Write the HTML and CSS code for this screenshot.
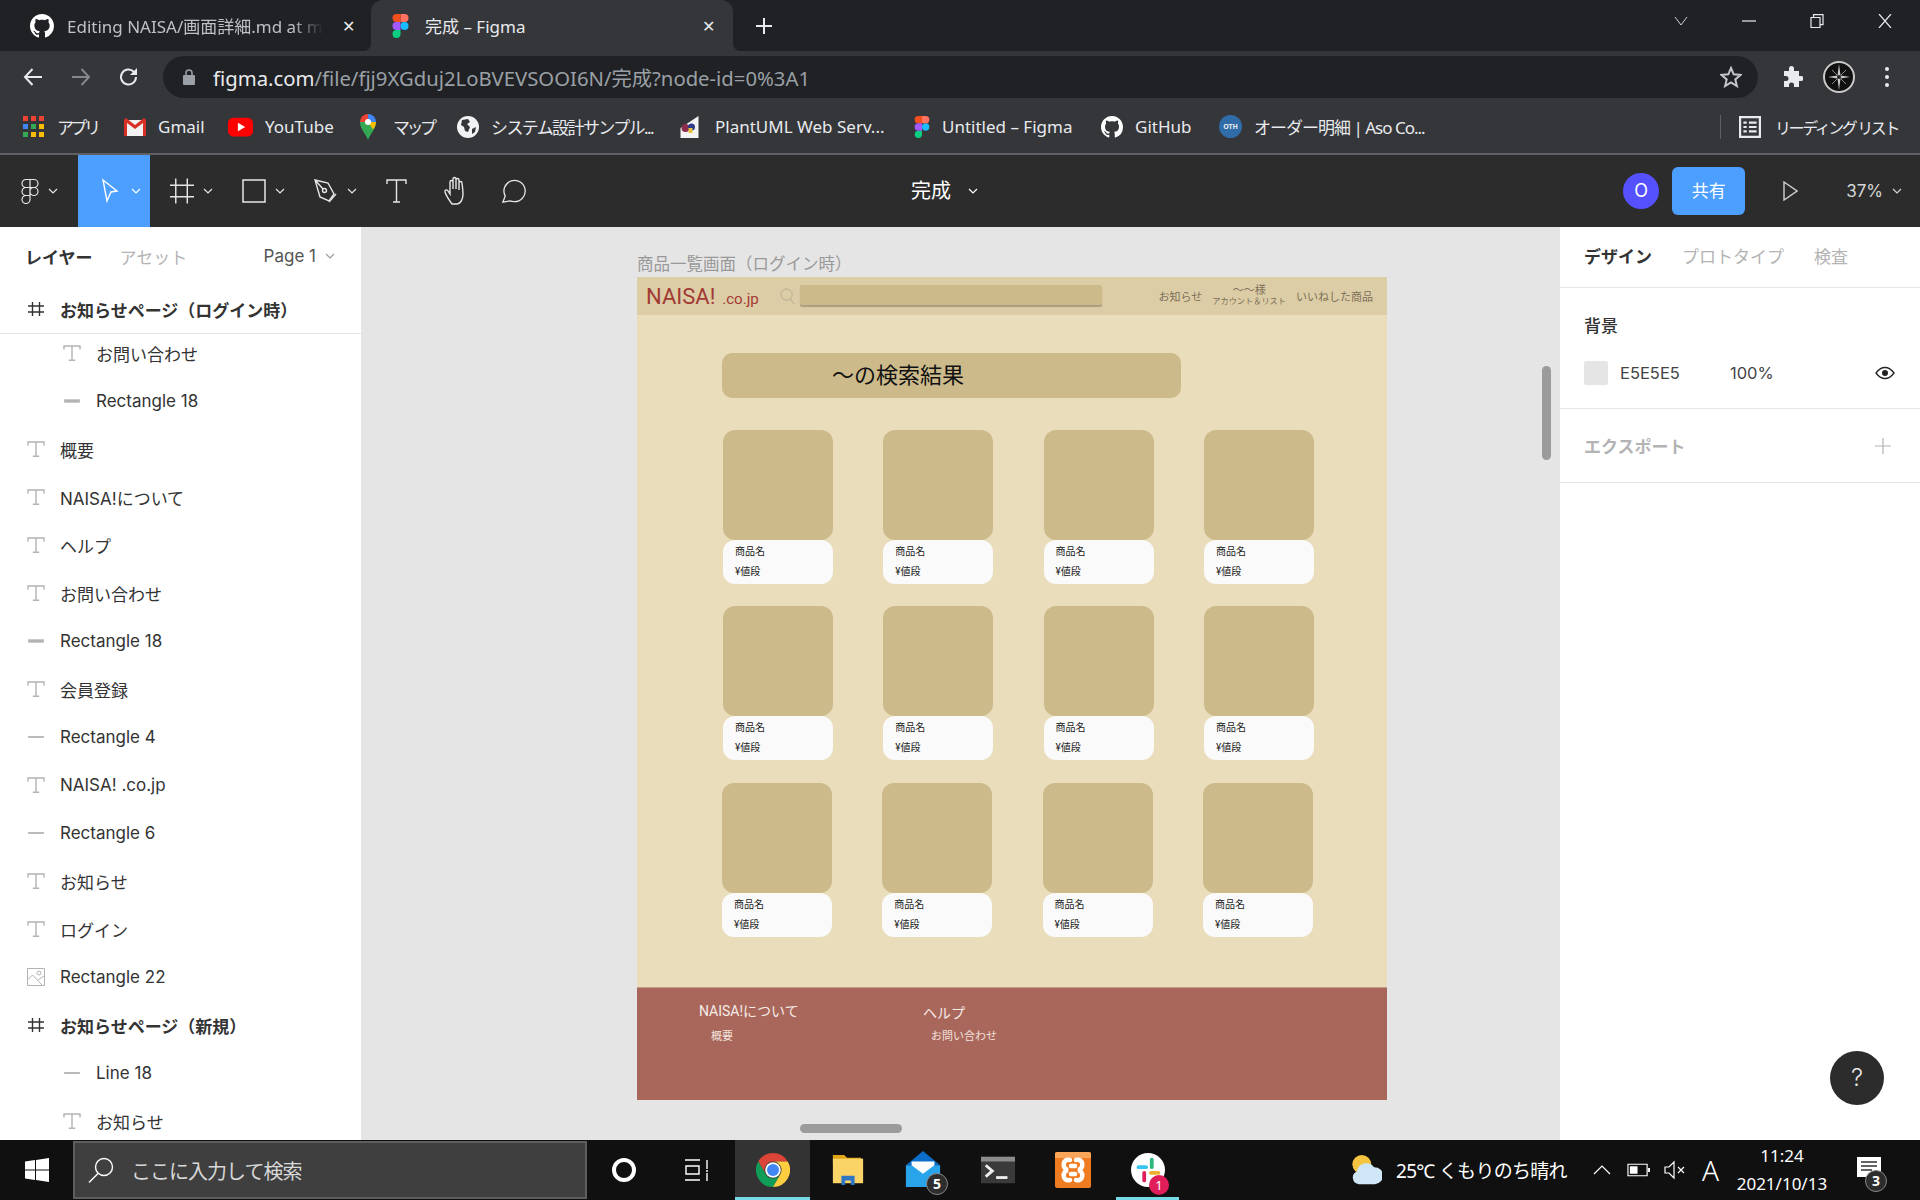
FILE: index.html
```html
<!DOCTYPE html>
<html lang="ja">
<head>
  <meta charset="UTF-8">
  <title>完成 – Figma</title>
  <link rel="stylesheet" href="styles.css">
</head>
<body>

  <svg class="defs" width="0" height="0">
    <symbol id="i-github" viewBox="0 0 16 16"><path fill="currentColor" d="M8 0C3.58 0 0 3.58 0 8c0 3.54 2.29 6.53 5.47 7.59.4.07.55-.17.55-.38 0-.19-.01-.82-.01-1.49-2.01.37-2.53-.49-2.69-.94-.09-.23-.48-.94-.82-1.13-.28-.15-.68-.52-.01-.53.63-.01 1.08.58 1.23.82.72 1.21 1.87.87 2.33.66.07-.52.28-.87.51-1.07-1.78-.2-3.64-.89-3.64-3.95 0-.87.31-1.59.82-2.15-.08-.2-.36-1.02.08-2.12 0 0 .67-.21 2.2.82.64-.18 1.32-.27 2-.27.68 0 1.36.09 2 .27 1.53-1.04 2.2-.82 2.2-.82.44 1.1.16 1.92.08 2.12.51.56.82 1.27.82 2.15 0 3.07-1.87 3.75-3.65 3.95.29.25.54.73.54 1.48 0 1.07-.01 1.93-.01 2.2 0 .21.15.46.55.38A8.013 8.013 0 0016 8c0-4.42-3.58-8-8-8z"/></symbol>
    <symbol id="i-figma" viewBox="0 0 38 57">
      <path fill="#1abcfe" d="M19 28.5a9.5 9.5 0 1 1 19 0 9.5 9.5 0 0 1-19 0z"/>
      <path fill="#0acf83" d="M0 47.5A9.5 9.5 0 0 1 9.5 38H19v9.5a9.5 9.5 0 1 1-19 0z"/>
      <path fill="#ff7262" d="M19 0v19h9.5a9.5 9.5 0 1 0 0-19H19z"/>
      <path fill="#f24e1e" d="M0 9.5A9.5 9.5 0 0 0 9.5 19H19V0H9.5A9.5 9.5 0 0 0 0 9.5z"/>
      <path fill="#a259ff" d="M0 28.5A9.5 9.5 0 0 0 9.5 38H19V19H9.5A9.5 9.5 0 0 0 0 28.5z"/>
    </symbol>
    <symbol id="i-chev" viewBox="0 0 10 6"><path fill="none" stroke="currentColor" stroke-width="1.2" d="M1 1l4 4 4-4"/></symbol>
    <symbol id="i-text" viewBox="0 0 18 16"><path fill="none" stroke="#b3b3b3" stroke-width="1.4" d="M1 4.500V1h16v3.500M9 1v14.300M5.800 15.300h6.400"/></symbol>
    <symbol id="i-rect" viewBox="0 0 16 16"><path fill="none" stroke="#b3b3b3" stroke-width="3" d="M1 8h14"/></symbol>
    <symbol id="i-line" viewBox="0 0 16 16"><path fill="none" stroke="#b3b3b3" stroke-width="1.6" d="M1 8h14"/></symbol>
    <symbol id="i-frame" viewBox="0 0 18 16"><path fill="none" stroke="#333" stroke-width="1.4" d="M1 5h16M1 11h16M5.500 1v14M12.500 1v14"/></symbol>
    <symbol id="i-image" viewBox="0 0 18 18"><path fill="none" stroke="#b3b3b3" stroke-width="1" d="M.5.5h17v17H.5zM.5 12l5-5 10 10.500M11 12l6-4"/><circle cx="12" cy="5" r="2" fill="none" stroke="#b3b3b3"/></symbol>
    <symbol id="i-chrome" viewBox="0 0 48 48">
      <path fill="#db4437" d="M24 0C15.100 0 7.300 4.800 3.200 12l10.400 18A12 12 0 0 1 24 12h20.800C40.700 4.800 32.900 0 24 0z"/>
      <path fill="#0f9d58" d="M3.200 12A24 24 0 0 0 24 48l10.400-18a12 12 0 0 1-20.800 0z"/>
      <path fill="#ffcd40" d="M44.800 12H24a12 12 0 0 1 10.400 18L24 48a24 24 0 0 0 20.800-36z"/>
      <circle cx="24" cy="24" r="11" fill="#fff"/><circle cx="24" cy="24" r="8.500" fill="#4285f4"/>
    </symbol>
  </svg>

  <div class="tabstrip">
    <div class="tab">
      <svg class="tab-icon"><use href="#i-github"/></svg>
      <span class="tab-title fade">Editing NAISA/画面詳細.md at m</span>
      <span class="tab-close">✕</span>
    </div>
    <div class="tab active">
      <svg class="tab-icon figma-small"><use href="#i-figma"/></svg>
      <span class="tab-title">完成 – Figma</span>
      <span class="tab-close">✕</span>
    </div>
    <svg class="new-tab" viewBox="0 0 18 18"><path stroke="#e8eaed" stroke-width="2" d="M9 1v16M1 9h16"/></svg>
    <div class="win-controls">
      <svg viewBox="0 0 14 14"><path fill="none" stroke="#cfd0d2" d="M1 3l6 8 6-8"/></svg>
      <svg viewBox="0 0 14 14"><path stroke="#e8eaed" stroke-width="1.200" d="M0 7h14"/></svg>
      <svg viewBox="0 0 14 14"><path fill="none" stroke="#e8eaed" stroke-width="1.200" d="M1 3.500h9v10H1zM3.500 3.500V.7h9.500v10h-3"/></svg>
      <svg viewBox="0 0 14 14"><path stroke="#e8eaed" stroke-width="1.200" d="M1 0l12 14M13 0L1 14"/></svg>
    </div>
  </div>

  <div class="addressrow">
    <svg class="nav-btn" viewBox="0 0 20 20"><path fill="none" stroke="#e8eaed" stroke-width="2" d="M19 10H2M9.500 2L2 10l7.500 8"/></svg>
    <svg class="nav-btn" viewBox="0 0 20 20"><path fill="none" stroke="#85878a" stroke-width="2" d="M1 10h17M10.500 2L18 10l-7.500 8"/></svg>
    <svg class="nav-btn" viewBox="0 0 20 20"><path fill="none" stroke="#e8eaed" stroke-width="2" d="M17 10a7.500 7.500 0 1 1-2.200-5.300L17 7"/><path fill="#e8eaed" d="M18 1v7h-7z"/></svg>
    <div class="omnibox">
      <svg class="lock" viewBox="0 0 12 16"><path fill="#9aa0a6" d="M1 6h10a1 1 0 0 1 1 1v8a1 1 0 0 1-1 1H1a1 1 0 0 1-1-1V7a1 1 0 0 1 1-1z"/><path fill="none" stroke="#9aa0a6" stroke-width="1.500" d="M3 6V4a3 3 0 0 1 6 0v2"/></svg>
      <span class="url"><b>figma.com</b>/file/fjj9XGduj2LoBVEVSOOI6N/完成?node-id=0%3A1</span>
      <svg class="star" viewBox="0 0 22 22"><path fill="none" stroke="#c4c6c9" stroke-width="2" d="M11 2l2.700 6.300 6.800.6-5.200 4.500 1.600 6.700L11 16.500l-5.900 3.600 1.600-6.700L1.500 8.900l6.800-.6z"/></svg>
    </div>
    <svg class="puzzle" viewBox="0 0 22 22"><path fill="#e8eaed" d="M8 2.500a2.500 2.500 0 0 1 5 0V5h5v5h2a2.500 2.500 0 0 1 0 5h-2v6h-5v-2a2.500 2.500 0 0 0-5 0v2H3v-6h2a2.500 2.500 0 0 0 0-5H3V5h5z"/></svg>
    <svg class="profile" viewBox="0 0 32 32">
      <circle cx="16" cy="16" r="15" fill="#111" stroke="#c9c9c9" stroke-width="2"/>
      <path fill="#c9c9c9" d="M16 3l1.500 11.500L27 16l-9.500 1.500L16 29l-1.500-11.500L5 16l9.500-1.500z"/>
      <path fill="none" stroke="#888" d="M9 9l14 14M23 9L9 23"/>
      <circle cx="16" cy="16" r="2" fill="#222"/>
    </svg>
    <div class="menu-dots"><i></i><i></i><i></i></div>
  </div>

  <div class="bookmarks">
    <div class="bm">
      <div class="apps-grid">
        <i class="c-r"></i><i class="c-r"></i><i class="c-r"></i>
        <i class="c-b"></i><i class="c-g"></i><i class="c-y"></i>
        <i class="c-g"></i><i class="c-y"></i><i class="c-y"></i>
      </div>
      <span class="tighter">アプリ</span>
    </div>
    <div class="bm">
      <svg class="bm-icon" viewBox="0 0 22 18"><path fill="#f2f2f2" d="M0 2h22v16H0z"/><path fill="#d93025" d="M0 2l2-2 9 7 9-7 2 2v16h-3V5l-8 6-8-6v13H0z"/></svg>
      <span>Gmail</span>
    </div>
    <div class="bm">
      <svg class="bm-icon wide" viewBox="0 0 24 18"><rect width="24" height="18" rx="5" fill="#f00"/><path fill="#fff" d="M9.500 5l7 4-7 4z"/></svg>
      <span>YouTube</span>
    </div>
    <div class="bm">
      <svg class="bm-icon maps" viewBox="0 0 16 26">
        <path fill="#34a853" d="M8 26C6 20 0 15 0 8h16c0 7-6 12-8 18z"/>
        <path fill="#fbbc04" d="M16 8c0 3-1.500 5.500-3 7.500L8 8z"/>
        <path fill="#4285f4" d="M8 0a8 8 0 0 1 8 8H8z"/>
        <path fill="#ea4335" d="M8 0a8 8 0 0 0-8 8h8z"/>
        <circle cx="8" cy="8" r="3" fill="#fff"/>
      </svg>
      <span class="tighter">マップ</span>
    </div>
    <div class="bm">
      <svg class="bm-icon" viewBox="0 0 22 22"><circle cx="11" cy="11" r="11" fill="#f1f3f4"/><path fill="#35363a" d="M5 4l6-1 2 3-3 2 3 3-2 5-3-1-1-4-3-2zM15 13l4-2-1 5-3 2z"/></svg>
      <span class="tight">システム設計サンプル...</span>
    </div>
    <div class="bm">
      <svg class="bm-icon wide" viewBox="0 0 24 22"><path fill="#f4f4f4" d="M2 12L20 0v22H2z"/><circle cx="7" cy="12" r="4" fill="#8a2c4a"/><circle cx="13" cy="11" r="3.500" fill="#2c3a8a"/><path fill="#e8c440" d="M10 12h4v5h-4z"/></svg>
      <span>PlantUML Web Serv...</span>
    </div>
    <div class="bm">
      <svg class="bm-icon figma-bm"><use href="#i-figma"/></svg>
      <span>Untitled – Figma</span>
    </div>
    <div class="bm">
      <svg class="bm-icon"><use href="#i-github"/></svg>
      <span>GitHub</span>
    </div>
    <div class="bm">
      <span class="oth">OTH</span>
      <span class="tight-1">オーダー明細 | Aso Co...</span>
    </div>
    <div class="reading">
      <svg class="bm-icon" viewBox="0 0 20 20"><path fill="none" stroke="#e8eaed" stroke-width="2" d="M1 1h18v18H1z"/><path stroke="#e8eaed" stroke-width="2" d="M4 6h3M9 6h7M4 10h3M9 10h7M4 14h3M9 14h7"/></svg>
      <span class="reading-text">リーディング リスト</span>
    </div>
  </div>

  <div class="fig-toolbar">
    <div class="tool tool-logo">
      <svg class="tool-svg logo-outline" viewBox="0 0 18 25"><path fill="none" stroke="#e6e6e6" stroke-width="1.200" d="M9 1H5a4 4 0 0 0 0 8h4zM9 1h4a4 4 0 0 1 0 8H9zM9 9H5a4 4 0 0 0 0 8h4zM9 13a4 4 0 1 0 8 0 4 4 0 0 0-8 0zM9 17H5a4 4 0 1 0 4 4z"/></svg>
      <svg class="chev"><use href="#i-chev"/></svg>
    </div>
    <div class="tool tool-move">
      <svg class="tool-svg" viewBox="0 0 18 26"><path fill="none" stroke="#fff" stroke-width="1.400" d="M2 2l14 11-6 1-4 9z"/></svg>
      <svg class="chev"><use href="#i-chev"/></svg>
    </div>
    <div class="tool">
      <svg class="tool-svg" viewBox="0 0 25 26"><path fill="none" stroke="#e6e6e6" stroke-width="1.500" d="M0 7h25M0 19h25M6 0v26M18 0v26"/></svg>
      <svg class="chev"><use href="#i-chev"/></svg>
    </div>
    <div class="tool">
      <svg class="tool-svg" viewBox="0 0 24 24"><path fill="none" stroke="#e6e6e6" stroke-width="1.500" d="M1 1h22v22H1z"/></svg>
      <svg class="chev"><use href="#i-chev"/></svg>
    </div>
    <div class="tool">
      <svg class="tool-svg" viewBox="0 0 24 24"><path fill="none" stroke="#e6e6e6" stroke-width="1.400" d="M1 1l13 3 6 11-5 7-9-4zM1 1l8 9"/><circle cx="10.500" cy="11.500" r="2" fill="none" stroke="#e6e6e6" stroke-width="1.400"/><path stroke="#e6e6e6" stroke-width="1.400" d="M15 23l7-8"/></svg>
      <svg class="chev"><use href="#i-chev"/></svg>
    </div>
    <div class="tool tool-plain">
      <svg class="tool-svg" viewBox="0 0 24 24"><path fill="none" stroke="#e6e6e6" stroke-width="1.400" d="M1 5V1h19v4M10.500 1v22M7 23h7"/></svg>
    </div>
    <div class="tool tool-plain">
      <svg class="tool-svg hand" viewBox="0 0 26 30"><path fill="none" stroke="#e6e6e6" stroke-width="1.400" d="M8 28C5 24 2 19 1 16c-.5-2 2-3 3-1l2 3V6c0-2 3-2 3 0v7V3c0-2 3-2 3 0v10V4c0-2 3-2 3 0v10V7c0-2 3-2 3 0 .5 4 1 8 1 11 0 6-3 10-6 10z"/></svg>
    </div>
    <div class="tool tool-plain">
      <svg class="tool-svg comment" viewBox="0 0 26 26"><path fill="none" stroke="#e6e6e6" stroke-width="1.400" d="M1 25l2.500-6.500A11.500 11.500 0 1 1 13 24.500c-1.500 0-3-.3-4.300-.8z"/></svg>
    </div>

    <div class="doc-title">完成<svg class="chev"><use href="#i-chev"/></svg></div>

    <div class="toolbar-right">
      <div class="avatar">O</div>
      <div class="share">共有</div>
      <svg class="play" viewBox="0 0 15 20"><path fill="none" stroke="#d0d0d0" stroke-width="1.400" d="M1 1l13 9-13 9z"/></svg>
      <div class="zoom">37%<svg class="chev"><use href="#i-chev"/></svg></div>
    </div>
  </div>

  <div class="workspace">
    <aside class="left-panel">
      <div class="panel-tabs">
        <span class="on">レイヤー</span>
        <span class="off">アセット</span>
        <span class="page">Page 1<svg class="chev"><use href="#i-chev"/></svg></span>
      </div>
      <div class="layer-head">
        <svg class="layer-icon"><use href="#i-frame"/></svg>お知らせページ（ログイン時）
      </div>
      <div class="layer-list">
        <div class="layer sub"><svg class="layer-icon"><use href="#i-text"/></svg>お問い合わせ</div>
        <div class="layer sub"><svg class="layer-icon"><use href="#i-rect"/></svg>Rectangle 18</div>
        <div class="layer"><svg class="layer-icon"><use href="#i-text"/></svg>概要</div>
        <div class="layer"><svg class="layer-icon"><use href="#i-text"/></svg>NAISA!について</div>
        <div class="layer"><svg class="layer-icon"><use href="#i-text"/></svg>ヘルプ</div>
        <div class="layer"><svg class="layer-icon"><use href="#i-text"/></svg>お問い合わせ</div>
        <div class="layer"><svg class="layer-icon"><use href="#i-rect"/></svg>Rectangle 18</div>
        <div class="layer"><svg class="layer-icon"><use href="#i-text"/></svg>会員登録</div>
        <div class="layer"><svg class="layer-icon"><use href="#i-line"/></svg>Rectangle 4</div>
        <div class="layer"><svg class="layer-icon"><use href="#i-text"/></svg>NAISA! .co.jp</div>
        <div class="layer"><svg class="layer-icon"><use href="#i-line"/></svg>Rectangle 6</div>
        <div class="layer"><svg class="layer-icon"><use href="#i-text"/></svg>お知らせ</div>
        <div class="layer"><svg class="layer-icon"><use href="#i-text"/></svg>ログイン</div>
        <div class="layer"><svg class="layer-icon"><use href="#i-image"/></svg>Rectangle 22</div>
        <div class="layer bold"><svg class="layer-icon"><use href="#i-frame"/></svg>お知らせページ（新規）</div>
        <div class="layer sub"><svg class="layer-icon"><use href="#i-line"/></svg>Line 18</div>
        <div class="layer sub"><svg class="layer-icon"><use href="#i-text"/></svg>お知らせ</div>
      </div>
    </aside>

    <main class="canvas">
      <div class="frame-label">商品一覧画面（ログイン時）</div>
      <div class="frame">
        <div class="site-header">
          <div class="site-logo">NAISA!<small>.co.jp</small></div>
          <svg class="site-search-icon" viewBox="0 0 16 18"><circle cx="7" cy="7" r="6" fill="none" stroke="#b5aa90"/><path stroke="#b5aa90" d="M11 11.500l4 5.500"/></svg>
          <div class="site-search"></div>
          <nav class="site-nav">
            <span>お知らせ</span>
            <span class="account"><span>～～様</span><small>アカウント＆リスト</small></span>
            <span>いいねした商品</span>
          </nav>
        </div>

        <div class="site-body">
          <div class="result-banner">～の検索結果</div>

          <div class="product-row">
            <div class="card"><div class="thumb"></div><div class="info"><p>商品名</p><p>¥値段</p></div></div>
            <div class="card"><div class="thumb"></div><div class="info"><p>商品名</p><p>¥値段</p></div></div>
            <div class="card"><div class="thumb"></div><div class="info"><p>商品名</p><p>¥値段</p></div></div>
            <div class="card"><div class="thumb"></div><div class="info"><p>商品名</p><p>¥値段</p></div></div>
          </div>
          <div class="product-row">
            <div class="card"><div class="thumb"></div><div class="info"><p>商品名</p><p>¥値段</p></div></div>
            <div class="card"><div class="thumb"></div><div class="info"><p>商品名</p><p>¥値段</p></div></div>
            <div class="card"><div class="thumb"></div><div class="info"><p>商品名</p><p>¥値段</p></div></div>
            <div class="card"><div class="thumb"></div><div class="info"><p>商品名</p><p>¥値段</p></div></div>
          </div>
          <div class="product-row last">
            <div class="card"><div class="thumb"></div><div class="info"><p>商品名</p><p>¥値段</p></div></div>
            <div class="card"><div class="thumb"></div><div class="info"><p>商品名</p><p>¥値段</p></div></div>
            <div class="card"><div class="thumb"></div><div class="info"><p>商品名</p><p>¥値段</p></div></div>
            <div class="card"><div class="thumb"></div><div class="info"><p>商品名</p><p>¥値段</p></div></div>
          </div>
        </div>

        <div class="site-footer">
          <div class="foot-col about">
            <h4>NAISA!について</h4>
            <p>概要</p>
          </div>
          <div class="foot-col help">
            <h4>ヘルプ</h4>
            <p>お問い合わせ</p>
          </div>
        </div>
      </div>

      <div class="scroll-v"></div>
      <div class="scroll-h"></div>
    </main>

    <aside class="right-panel">
      <div class="right-tabs">
        <span class="on">デザイン</span>
        <span class="off">プロトタイプ</span>
        <span class="off">検査</span>
      </div>
      <div class="right-section bg-section">
        <h5>背景</h5>
        <div class="bg-row">
          <i class="swatch"></i>
          <span class="hex">E5E5E5</span>
          <span class="opacity">100%</span>
          <svg class="eye" viewBox="0 0 20 14"><path fill="none" stroke="#222" stroke-width="1.300" d="M1 7c2.500-3.500 5.500-5.500 9-5.500S16.500 3.500 19 7c-2.500 3.500-5.500 5.500-9 5.500S3.500 10.500 1 7z"/><circle cx="10" cy="7" r="3" fill="#222"/></svg>
        </div>
      </div>
      <div class="right-section export-section">
        <h5>エクスポート</h5>
        <svg class="plus" viewBox="0 0 18 18"><path stroke="#b3b3b3" stroke-width="1.200" d="M9 1v16M1 9h16"/></svg>
      </div>
      <div class="help-btn">?</div>
    </aside>
  </div>

  <footer class="taskbar">
    <div class="start">
      <svg viewBox="0 0 24 24"><path fill="#fff" d="M0 3.400l10-1.400v9.500H0zM11 1.900L24 0v11.500H11zM0 12.500h10V22L0 20.600zM11 12.500h13V24l-13-1.900z"/></svg>
    </div>
    <div class="searchbox">
      <svg viewBox="0 0 26 26"><circle cx="16" cy="10" r="8.500" fill="none" stroke="#fff" stroke-width="1.400"/><path stroke="#fff" stroke-width="1.400" d="M10 16.500L1 25.500"/></svg>
      <span>ここに入力して検索</span>
    </div>
    <div class="tb-slot cortana"><i></i></div>
    <div class="tb-slot">
      <svg class="taskview" viewBox="0 0 24 22"><path fill="none" stroke="#fff" stroke-width="1.400" d="M0 1h15M0 21h15M1 7h13v8H1zM22 1v9M22 14v8"/><circle cx="22" cy="12" r="1" fill="#fff"/></svg>
    </div>
    <div class="tb-slot running current"><svg class="tb-icon"><use href="#i-chrome"/></svg></div>
    <div class="tb-slot">
      <svg class="tb-icon" viewBox="0 0 32 36"><path fill="#e0a417" d="M0 2h12l3 3h15v6H0z"/><path fill="#fbd467" d="M0 6h32v26H0z"/><path fill="#2d77c4" d="M9 24h14v10h-4v-5h-6v5H9z"/></svg>
    </div>
    <div class="tb-slot">
      <svg class="tb-icon mail" viewBox="0 0 36 40"><path fill="#0c6ec9" d="M18 0l18 15H0z"/><path fill="#29a4ea" d="M0 15h36v23H0z"/><path fill="#fff" d="M6 11h24v4l-12 9-12-9z"/></svg>
      <span class="tb-badge dark">5</span>
    </div>
    <div class="tb-slot">
      <svg class="tb-icon" viewBox="0 0 36 28"><path fill="#3a3a3a" d="M0 0h36v28H0z"/><path fill="#8c8c8c" d="M0 0h36v5H0z"/><path fill="none" stroke="#eee" stroke-width="3" d="M5 9l7 6-7 6"/><path stroke="#eee" stroke-width="3" d="M16 22h12"/></svg>
    </div>
    <div class="tb-slot">
      <svg class="tb-icon xampp" viewBox="0 0 36 36"><rect width="36" height="36" rx="2" fill="#f07c22"/><path fill="#f9a65a" d="M0 2a2 2 0 0 1 2-2h32a2 2 0 0 1 2 2v4H0z"/><path fill="none" stroke="#fff" stroke-width="4.500" stroke-linecap="round" d="M15 8C7 6 7 17 13 18 7 19 7 30 15 28M21 8c8-2 8 9 2 10 6 1 6 12-2 10M16 14h4M16 22h4"/></svg>
    </div>
    <div class="tb-slot running">
      <svg class="tb-icon" viewBox="0 0 36 36">
        <circle cx="18" cy="18" r="18" fill="#fff"/>
        <path stroke="#36c5f0" stroke-width="4" stroke-linecap="round" d="M8 15h8"/>
        <path stroke="#2eb67d" stroke-width="4" stroke-linecap="round" d="M22 7v8"/>
        <path stroke="#e01e5a" stroke-width="4" stroke-linecap="round" d="M14 21v8"/>
        <path stroke="#ecb22e" stroke-width="4" stroke-linecap="round" d="M21 21h8"/>
      </svg>
      <span class="tb-badge red">1</span>
    </div>

    <div class="tray">
      <svg class="weather" viewBox="0 0 32 36"><circle cx="11" cy="12" r="10" fill="#f5c542"/><path fill="#cfe6f7" d="M8 33a7 7 0 0 1-2-13.500A10 10 0 0 1 24 15a9 9 0 0 1 1 18z"/></svg>
      <span class="weather-text">25℃ くもりのち晴れ</span>
      <svg class="tray-up" viewBox="0 0 18 10"><path fill="none" stroke="#fff" stroke-width="1.200" d="M1 9l8-8 8 8"/></svg>
      <svg class="tray-batt" viewBox="0 0 24 14"><path fill="none" stroke="#fff" stroke-width="1.200" d="M1 1h20v12H1z"/><path fill="#fff" d="M3 3h8v8H3zM22 5h2v4h-2z"/></svg>
      <svg class="tray-vol" viewBox="0 0 22 20"><path fill="none" stroke="#fff" stroke-width="1.200" d="M1 7h4l5-5v16l-5-5H1zM14 7l6 6M20 7l-6 6"/></svg>
      <span class="ime">A</span>
      <div class="clock"><span>11:24</span><span>2021/10/13</span></div>
      <div class="notify">
        <svg viewBox="0 0 24 26"><path fill="#fff" d="M0 0h24v20H12l-3 5v-5H0z"/><path stroke="#333" stroke-width="1.300" d="M4 5h16M4 9h16M4 13h11"/></svg>
        <span class="tb-badge dark">3</span>
      </div>
    </div>
  </footer>

</body>
</html>
```

FILE: styles.css
```css
* {
  box-sizing: border-box;
}

html, body {
  margin: 0;
  height: 1200px;
  overflow: hidden;
}

body {
  display: flex;
  flex-direction: column;
  font-family: "Noto Sans", "Noto Sans CJK JP", sans-serif;
  color: #fff;
  background: #101010;
}

.defs {
  position: absolute;
}

p, h4, h5 {
  margin: 0;
  font-size: inherit;
  font-weight: inherit;
}

/* ブラウザのタブ */
.tabstrip {
  height: 51px;
  background: #202124;
  display: flex;
  align-items: flex-end;
  padding-left: 9px;
  flex-shrink: 0;
}

.tab {
  width: 362px;
  height: 51px;
  display: flex;
  align-items: center;
  padding-left: 21px;
  font-size: 17px;
  color: #bdc1c6;
}

.tab.active {
  background: #35363a;
  color: #e8eaed;
  border-radius: 12px 12px 0 0;
  padding-left: 21px;
  position: relative;
}

.tab.active::before,
.tab.active::after {
  content: "";
  position: absolute;
  bottom: 0;
  width: 8px;
  height: 8px;
}

.tab.active::before {
  left: -8px;
  background: radial-gradient(circle at 0 0, #202124 8px, #35363a 8.5px);
}

.tab.active::after {
  right: -8px;
  background: radial-gradient(circle at 100% 0, #202124 8px, #35363a 8.5px);
}

.tab-icon {
  width: 24px;
  height: 24px;
  color: #fff;
  flex-shrink: 0;
}

.figma-small {
  width: 17px;
}

.tab-title {
  margin-left: 13px;
  white-space: nowrap;
}

.tab.active .tab-title {
  margin-left: 16px;
}

.fade {
  -webkit-mask-image: linear-gradient(to right, #000 88%, transparent 100%);
  mask-image: linear-gradient(to right, #000 88%, transparent 100%);
}

.tab-close {
  margin-left: auto;
  width: 46px;
  font-size: 16px;
  color: #e8eaed;
  text-align: center;
}

.tab.active .tab-close {
  padding-right: 4px;
}

.new-tab {
  width: 18px;
  height: 18px;
  margin: 0 0 16px 22px;
}

.win-controls {
  margin-left: auto;
  display: flex;
  align-self: flex-start;
  padding-top: 14px;
  padding-right: 28px;
  gap: 54px;
}

.win-controls svg {
  width: 14px;
  height: 14px;
}

/* アドレスバー */
.addressrow {
  height: 51px;
  background: #35363a;
  display: flex;
  align-items: center;
  padding-left: 23px;
  flex-shrink: 0;
}

.nav-btn {
  width: 20px;
  height: 20px;
  margin-right: 28px;
}

.omnibox {
  width: 1595px;
  height: 42px;
  margin-left: -4px;
  border-radius: 21px;
  background: #202124;
  display: flex;
  align-items: center;
  padding: 0 16px 0 20px;
}

.lock {
  width: 12px;
  height: 16px;
}

.url {
  margin-left: 18px;
  font-size: 20.300px;
  color: #9aa0a6;
  white-space: nowrap;
}

.url b {
  font-weight: 400;
  color: #e8eaed;
}

.star {
  width: 22px;
  height: 22px;
  margin-left: auto;
}

.puzzle {
  width: 22px;
  height: 22px;
  margin-left: 23px;
}

.profile {
  width: 32px;
  height: 32px;
  margin-left: 20px;
}

.menu-dots {
  display: flex;
  flex-direction: column;
  gap: 4px;
  margin-left: 30px;
}

.menu-dots i {
  width: 4px;
  height: 4px;
  border-radius: 50%;
  background: #e8eaed;
}

/* ブックマーク */
.bookmarks {
  height: 53px;
  background: #35363a;
  border-bottom: 2px solid #5f6063;
  padding: 0 22px 2px 23px;
  display: grid;
  grid-template-columns: 101px 104px 132px 97px 221px 236px 187px 118px 1fr auto;
  align-items: center;
  font-size: 17px;
  color: #e8eaed;
  flex-shrink: 0;
}

.bm {
  display: flex;
  align-items: center;
  gap: 12px;
  white-space: nowrap;
}

.tight {
  letter-spacing: -1.600px;
}

.tight-1 {
  letter-spacing: -1px;
}

.tighter {
  letter-spacing: -3.500px;
}

.bm-icon {
  width: 22px;
  height: 22px;
  color: #fff;
  flex-shrink: 0;
}

.bm-icon.wide {
  width: 25px;
}

.bm-icon.maps {
  width: 16px;
  height: 26px;
  margin-right: 5px;
}

.bm-icon.figma-bm {
  width: 16px;
}

.apps-grid {
  width: 21px;
  display: grid;
  grid-template-columns: repeat(3, 5px);
  gap: 3px;
  margin-right: 1px;
}

.apps-grid i {
  height: 5px;
}

.c-r { background: #ea4335; }
.c-b { background: #4285f4; }
.c-g { background: #34a853; }
.c-y { background: #fbbc04; }

.oth {
  width: 23px;
  height: 23px;
  border-radius: 50%;
  background: #2f6ca8;
  font-size: 7px;
  font-weight: 700;
  line-height: 23px;
  text-align: center;
}

.reading {
  display: flex;
  align-items: center;
  gap: 14px;
  border-left: 1px solid #5f6063;
  padding-left: 18px;
  height: 24px;
}

.reading-text {
  font-size: 16px;
  letter-spacing: -2.400px;
  white-space: nowrap;
}

/* Figma ツールバー */
.fig-toolbar {
  height: 72px;
  background: #2c2c2c;
  display: flex;
  align-items: stretch;
  font-family: Inter, "Noto Sans CJK JP", sans-serif;
  flex-shrink: 0;
}

.tool {
  width: 72px;
  display: flex;
  align-items: center;
  padding-left: 20px;
  color: #e6e6e6;
}

.tool-logo {
  width: 78px;
  padding-left: 21px;
}

.tool-move {
  background: #4c9fff;
  color: #fff;
}

.tool-plain {
  width: 60px;
}

.tool-svg {
  width: 24px;
  height: 26px;
  flex-shrink: 0;
}

.logo-outline {
  width: 18px;
}

.tool-svg.hand {
  width: 28px;
  height: 30px;
  margin-left: -3px;
}

.tool-svg.comment {
  margin-left: -4px;
}

.chev {
  width: 10px;
  height: 6px;
  margin-left: 9px;
  color: currentColor;
  flex-shrink: 0;
}

.doc-title {
  margin-left: 365px;
  padding-bottom: 3px;
  display: flex;
  align-items: center;
  font-size: 20px;
  color: #fff;
}

.doc-title .chev {
  margin-left: 17px;
  margin-top: 2px;
}

.toolbar-right {
  margin-left: auto;
  display: flex;
  align-items: center;
  padding-right: 18px;
}

.avatar {
  width: 36px;
  height: 36px;
  border-radius: 50%;
  background: #5551ff;
  font-size: 18px;
  line-height: 36px;
  text-align: center;
}

.share {
  width: 73px;
  height: 48px;
  margin-left: 13px;
  border-radius: 6px;
  background: #4c9fff;
  font-size: 17px;
  line-height: 48px;
  text-align: center;
}

.play {
  width: 15px;
  height: 20px;
  margin-left: 38px;
}

.zoom {
  margin-left: 48px;
  display: flex;
  align-items: center;
  font-size: 17px;
  color: #d5d5d5;
}

/* 作業エリア */
.workspace {
  height: 913px;
  display: flex;
  font-family: Inter, "Noto Sans CJK JP", sans-serif;
  flex-shrink: 0;
}

.left-panel {
  width: 361px;
  background: #fff;
  color: #333;
  overflow: hidden;
  position: relative;
  flex-shrink: 0;
}

.panel-tabs {
  height: 60px;
  display: flex;
  align-items: center;
  padding: 0 26px 2px 25px;
  font-size: 17px;
}

.panel-tabs .on {
  font-weight: 700;
}

.panel-tabs .off {
  margin-left: 27px;
  color: #b3b3b3;
}

.panel-tabs .page {
  margin-left: auto;
  display: flex;
  align-items: center;
  color: #555;
}

.panel-tabs .page .chev {
  color: #999;
}

.layer-head {
  height: 47px;
  padding-bottom: 2px;
  display: flex;
  align-items: center;
  padding-left: 27px;
  border-bottom: 1px solid #e5e5e5;
  font-size: 17px;
  font-weight: 700;
  position: relative;
  z-index: 1;
  background: #fff;
}

.layer-list {
  margin-top: -5px;
}

.layer {
  height: 48px;
  display: flex;
  align-items: center;
  padding-left: 27px;
  font-size: 17px;
  white-space: nowrap;
}

.layer.sub {
  padding-left: 63px;
}

.layer.bold {
  font-weight: 700;
}

.layer-icon {
  width: 18px;
  height: 18px;
  margin-right: 15px;
  flex-shrink: 0;
}

/* キャンバス */
.canvas {
  width: 1199px;
  background: #e5e5e5;
  position: relative;
  overflow: hidden;
  flex-shrink: 0;
}

.frame-label {
  position: absolute;
  left: 276px;
  top: 24px;
  font-size: 16.500px;
  color: #999;
  white-space: nowrap;
}

.frame {
  position: absolute;
  left: 276px;
  top: 50px;
  width: 750px;
  height: 823px;
  background: #eaddbc;
  display: flex;
  flex-direction: column;
  font-family: Roboto, "Noto Sans CJK JP", sans-serif;
}

.site-header {
  height: 38px;
  background: #dccda6;
  display: flex;
  align-items: center;
  padding: 0 14px 0 9px;
  flex-shrink: 0;
}

.site-logo {
  width: 134px;
  font-size: 22px;
  color: #a23a34;
  white-space: nowrap;
}

.site-logo small {
  font-size: 15px;
  margin-left: 7px;
}

.site-search-icon {
  width: 15px;
  height: 17px;
}

.site-search {
  width: 302px;
  height: 20px;
  margin-left: 5px;
  margin-top: -2px;
  background: #ccba8b;
  border-radius: 2px;
  box-shadow: 0 2px 1px #ab9e7f;
}

.site-nav {
  margin-left: auto;
  display: flex;
  align-items: center;
  gap: 10px;
  font-size: 11px;
  color: #7d705a;
}

.account {
  display: flex;
  flex-direction: column;
  align-items: center;
  line-height: 11px;
}

.account small {
  font-size: 8.200px;
}

.site-body {
  flex: 1;
  padding: 38px 0 0 85px;
}

.result-banner {
  width: 459px;
  height: 45px;
  margin-bottom: 32px;
  padding-left: 110px;
  background: #ccba8b;
  border-radius: 10px;
  font-size: 22px;
  line-height: 45px;
  color: #111;
}

.product-row {
  display: grid;
  grid-template-columns: repeat(4, 110px);
  column-gap: 50.300px;
  margin: 0 0 22.300px 1px;
}

.product-row.last {
  margin-left: 0;
}

.thumb {
  height: 110px;
  background: #ccba8b;
  border-radius: 12px;
}

.info {
  height: 44px;
  background: #fafafa;
  border-radius: 12px;
  padding: 2px 0 0 12px;
  font-size: 10px;
  line-height: 20px;
  color: #222;
}

.site-footer {
  height: 113px;
  background: #a9675c;
  border-top: 1px solid #c49a88;
  display: flex;
  padding-top: 13px;
  flex-shrink: 0;
}

.foot-col h4 {
  font-size: 14px;
  line-height: 20px;
  color: #f6ebe6;
}

.foot-col p {
  font-size: 11px;
  line-height: 16px;
  color: #f2e2dc;
}

.foot-col.about {
  width: 286px;
  padding-left: 62px;
}

.foot-col.about p {
  margin: 8px 0 0 12px;
}

.foot-col.help {
  padding-top: 2px;
}

.foot-col.help p {
  margin: 6px 0 0 8px;
}

.scroll-v {
  position: absolute;
  left: 1181px;
  top: 139px;
  width: 9px;
  height: 94px;
  border-radius: 5px;
  background: #9b9b9b;
}

.scroll-h {
  position: absolute;
  left: 439px;
  top: 897px;
  width: 102px;
  height: 9px;
  border-radius: 5px;
  background: #9b9b9b;
}

/* 右パネル */
.right-panel {
  flex: 1;
  background: #fff;
  color: #333;
  position: relative;
}

.right-tabs {
  height: 61px;
  display: flex;
  align-items: center;
  gap: 30px;
  padding: 0 0 3px 24px;
  border-bottom: 1px solid #e5e5e5;
  font-size: 17px;
}

.right-tabs .on {
  font-weight: 700;
}

.right-tabs .off {
  color: #b3b3b3;
}

.right-section {
  padding: 0 24px;
  border-bottom: 1px solid #e5e5e5;
  font-size: 17px;
}

.bg-section {
  height: 121px;
  padding-top: 26px;
}

.bg-section h5 {
  font-weight: 500;
  line-height: 24px;
}

.bg-row {
  display: flex;
  align-items: center;
  height: 24px;
  margin-top: 23px;
  font-size: 16.500px;
}

.swatch {
  width: 24px;
  height: 24px;
  border-radius: 2px;
  background: #e5e5e5;
}

.hex {
  margin-left: 12px;
  width: 110px;
  color: #444;
}

.opacity {
  color: #444;
}

.eye {
  width: 20px;
  height: 14px;
  margin-left: auto;
  margin-right: 1px;
}

.export-section {
  height: 74px;
  display: flex;
  align-items: center;
  justify-content: space-between;
  padding-right: 28px;
  color: #b3b3b3;
}

.export-section h5 {
  font-weight: 700;
}

.plus {
  width: 18px;
  height: 18px;
}

.help-btn {
  position: absolute;
  right: 36px;
  bottom: 35px;
  width: 54px;
  height: 54px;
  border-radius: 50%;
  background: #2c2c2c;
  color: #e6e6e6;
  font-size: 24px;
  font-weight: 300;
  line-height: 54px;
  text-align: center;
}

/* タスクバー */
.taskbar {
  height: 60px;
  background: #101010;
  display: flex;
  align-items: stretch;
  flex-shrink: 0;
}

.start {
  width: 73px;
  display: flex;
  align-items: center;
  justify-content: center;
}

.start svg {
  width: 24px;
  height: 24px;
}

.searchbox {
  width: 514px;
  margin: 1px 0;
  background: #3f3f3f;
  border: 2px solid #5e5e5e;
  display: flex;
  align-items: center;
  padding-left: 13px;
  font-size: 20px;
  letter-spacing: -1px;
  color: #d8d8d8;
}

.searchbox svg {
  width: 26px;
  height: 26px;
  margin-right: 17px;
}

.tb-slot {
  width: 73px;
  display: flex;
  align-items: center;
  justify-content: center;
  position: relative;
}

.tb-slot.running::after {
  content: "";
  position: absolute;
  left: 6px;
  right: 6px;
  bottom: 0;
  height: 3px;
  background: #76d9e6;
}

.tb-slot.current {
  width: 75px;
  margin-left: 2px;
  background: #333;
}

.tb-slot.current::after {
  left: 0;
  right: 0;
}

.tb-slot ~ .tb-slot ~ .tb-slot ~ .tb-slot {
  width: 75px;
}

.cortana i {
  width: 24px;
  height: 24px;
  border: 4px solid #fff;
  border-radius: 50%;
}

.taskview {
  width: 24px;
  height: 22px;
}

.tb-icon {
  width: 34px;
  height: 34px;
}

.tb-icon.mail {
  width: 38px;
  height: 38px;
}

.tb-icon.xampp {
  width: 36px;
  height: 36px;
}

.tb-badge {
  position: absolute;
  width: 22px;
  height: 22px;
  border-radius: 50%;
  font-size: 14px;
  font-weight: 700;
  line-height: 20px;
  text-align: center;
  right: 12px;
  bottom: 5px;
}

.tb-badge.dark {
  background: #2d2d2d;
  border: 1px solid #888;
}

.tb-badge.red {
  background: #e01e5a;
  right: 16px;
  width: 20px;
  height: 20px;
  font-weight: 400;
  font-size: 13px;
}

.tray {
  margin-left: 166px;
  display: flex;
  align-items: center;
  flex: 1;
}

.weather {
  width: 31px;
  height: 34px;
}

.weather-text {
  margin-left: 14px;
  font-size: 19px;
  letter-spacing: -0.700px;
  white-space: nowrap;
}

.tray-up {
  width: 18px;
  height: 10px;
  margin-left: 26px;
}

.tray-batt {
  width: 23px;
  height: 14px;
  margin-left: 16px;
}

.tray-vol {
  width: 22px;
  height: 20px;
  margin-left: 14px;
}

.ime {
  margin-left: 16px;
  font-size: 28px;
  font-weight: 300;
}

.clock {
  margin-left: 16px;
  width: 94px;
  display: flex;
  flex-direction: column;
  align-items: center;
  gap: 6px;
  font-size: 17px;
  line-height: 22px;
}

.notify {
  margin-left: 28px;
  position: relative;
  width: 24px;
  height: 26px;
}

.notify svg {
  width: 24px;
  height: 26px;
}

.notify .tb-badge {
  right: -6px;
  bottom: -9px;
}
```
